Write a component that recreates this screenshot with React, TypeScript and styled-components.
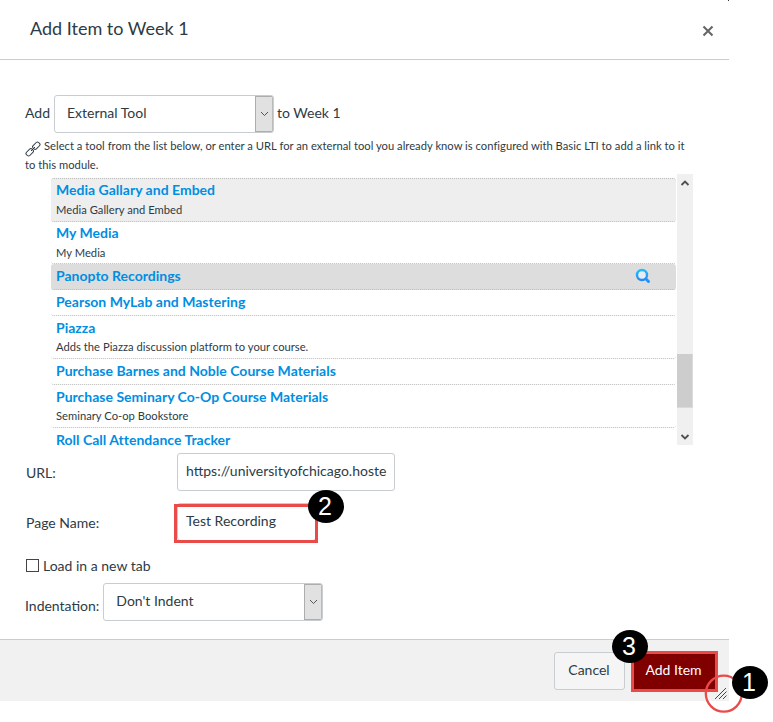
import React from "react";
import styled, { createGlobalStyle } from "styled-components";

const GlobalStyle = createGlobalStyle`
  * { box-sizing: border-box; }
  body {
    margin: 0;
    min-height: 722px;
    background: #fff;
    font-family: Lato, "Open Sans", sans-serif;
    font-size: 14px;
    line-height: 20px;
    color: #2d3b45;
  }
`;

const Dialog = styled.div`
  position: relative;
  width: 729px;
  height: 701px;
  display: flex;
  flex-direction: column;
`;

const Header = styled.header`
  height: 60px;
  flex: none;
  display: flex;
  align-items: flex-start;
  justify-content: space-between;
  padding: 16px 15px 0 30px;
  border-bottom: 1px solid #c7cdd1;
`;

const Title = styled.h2`
  margin: 0;
  font-size: 18px;
  font-weight: 400;
  line-height: 24px;
`;

const CloseButton = styled.button`
  display: flex;
  width: 12px;
  height: 12px;
  margin: 9px 0 0;
  padding: 0;
  border: 0;
  background: none;
`;

const Body = styled.main`
  flex: 1;
  padding: 35px 36px 0 25px;
`;

const Line = styled.div`
  display: flex;
  align-items: flex-start;
  height: 38px;
`;

const LineLabel = styled.span<{ $top: number; $gap?: number }>`
  margin-right: ${(p) => p.$gap ?? 0}px;
  padding-top: ${(p) => p.$top}px;
`;

const SelectBox = styled.div`
  width: 220px;
  height: 38px;
  margin-right: 3px;
  display: flex;
  justify-content: space-between;
  border: 1px solid #c7cdd1;
  border-radius: 3px;
  overflow: hidden;
  padding-left: 12px;
  line-height: 34px;
`;

const SelectArrow = styled.span`
  width: 18px;
  display: flex;
  align-items: center;
  justify-content: center;
  background: #e1e1e1;
  border: 1px solid #adadad;
  border-right-color: #bbb;
`;

const Hint = styled.p`
  margin: 3px 0 0;
  height: 38px;
  font-size: 11.2px;
  letter-spacing: 0.024px;
  line-height: 19px;
  white-space: nowrap;
`;

const HintIcon = styled.svg`
  width: 16px;
  height: 16px;
  margin: 0 3px -7px 0;
`;

const ToolArea = styled.div`
  display: flex;
  width: 642px;
  height: 271px;
  margin-left: 26px;
`;

const ToolList = styled.ul`
  list-style: none;
  width: 625px;
  height: 271px;
  margin: 0 1px 0 0;
  padding: 4px 0 0;
`;

const ToolRow = styled.li<{ $height: number; $pad: number; $bg?: string }>`
  position: relative;
  height: ${(p) => p.$height}px;
  padding: ${(p) => p.$pad}px 5px 0;
  border-bottom: 1px dotted #bbb;
  border-radius: 3px;
  background: ${(p) => p.$bg || "transparent"};

  &:first-child { border-top: 1px dotted #bbb; }
  &:last-child { border-bottom: 0; }
`;

const ToolName = styled.div`
  font-weight: 700;
  line-height: 19px;
  letter-spacing: 0.01px;
  color: #008ee2;
`;

const ToolNote = styled.div<{ $gap?: number }>`
  margin-top: ${(p) => p.$gap ?? 0}px;
  font-size: 11.2px;
  letter-spacing: 0.024px;
  line-height: 19px;
`;

const SearchIcon = styled.svg`
  position: absolute;
  right: 25px;
  top: 4px;
  width: 16px;
  height: 16px;
`;

const Scrollbar = styled.div`
  width: 16px;
  height: 271px;
  display: flex;
  flex-direction: column;
  align-items: center;
  background: #f0f0f0;
`;

const ScrollArrow = styled.svg`
  width: 10px;
  height: 17px;
  flex: none;
`;

const ScrollTrack = styled.div`
  width: 100%;
  flex: 1;
  padding-top: 163px;
`;

const ScrollThumb = styled.div`
  height: 54px;
  background: #cdcdcd;
  border-right: 1px solid #dadada;
  border-bottom: 1px solid #dadada;
`;

const Field = styled.div<{ $top: number }>`
  display: grid;
  grid-template-columns: 151px auto;
  justify-content: start;
  height: 38px;
  margin: ${(p) => p.$top}px 0 0 1px;
  line-height: 40px;
`;

const TextBox = styled.div<{ $width: number }>`
  position: relative;
  width: ${(p) => p.$width}px;
  height: 38px;
  padding-left: 8px;
  border: 1px solid #c7cdd1;
  border-radius: 3px;
  line-height: 34px;
  white-space: nowrap;
`;

const Highlight = styled.div`
  position: absolute;
  left: -4px;
  top: 0;
  width: 144px;
  height: 39px;
  border: 3px solid #e94b48;
`;

const CheckLine = styled.label`
  display: flex;
  align-items: flex-start;
  gap: 4px;
  height: 20px;
  margin: 15px 0 7px 1px;
`;

const CheckBox = styled.span`
  width: 13px;
  height: 13px;
  margin-top: 3px;
  border: 1px solid #444;
  background: #fff;
`;

const Footer = styled.footer`
  height: 62px;
  flex: none;
  display: flex;
  justify-content: flex-end;
  align-items: flex-start;
  gap: 6px;
  padding: 11px 11px 0 0;
  background: #f1f1f1;
  border-top: 1px solid #c7cdd1;
`;

const Cancel = styled.button`
  width: 71px;
  height: 38px;
  margin-top: 1px;
  padding: 0 1px 2px 0;
  font: inherit;
  color: #2d3b45;
  background: #f5f5f5;
  border: 1px solid #c7cdd1;
  border-radius: 3px;
`;

const AddItem = styled.button`
  width: 87px;
  height: 41px;
  padding: 0 2px 4px 0;
  font: inherit;
  color: #fff;
  background: #800000;
  border: 3px solid #e94b48;
  white-space: nowrap;
`;

const Badge = styled.div<{ $x: number; $y: number }>`
  position: absolute;
  left: ${(p) => p.$x}px;
  top: ${(p) => p.$y}px;
  width: 36px;
  height: 33px;
  padding-right: 2px;
  border-radius: 50%;
  background: #000;
  color: #fff;
  font: 25px/32px "Liberation Sans", Arial, sans-serif;
  text-align: center;
`;

const ResizeGrip = styled.svg`
  position: absolute;
  left: 704px;
  top: 673px;
  width: 40px;
  height: 42px;
`;

const EdgeMark = styled.i`
  position: absolute;
  left: 728px;
  top: 0;
  width: 1px;
  height: 1px;
  background: #2d3b45;
`;

type Tool = {
  name: string;
  note?: string;
  noteGap?: number;
  height: number;
  pad?: number;
  bg?: string;
  search?: boolean;
};

const tools: Tool[] = [
  { name: "Media Gallary and Embed", note: "Media Gallery and Embed", noteGap: 1, height: 44, pad: 1, bg: "#eee" },
  { name: "My Media", note: "My Media", noteGap: 1, height: 42, pad: 1 },
  { name: "Panopto Recordings", height: 26, bg: "#ddd", search: true },
  { name: "Pearson MyLab and Mastering", height: 26 },
  { name: "Piazza", note: "Adds the Piazza discussion platform to your course.", height: 43 },
  { name: "Purchase Barnes and Noble Course Materials", height: 26 },
  { name: "Purchase Seminary Co-Op Course Materials", note: "Seminary Co-op Bookstore", height: 43 },
  { name: "Roll Call Attendance Tracker", height: 17 },
];

function Select({ value }: { value: string }) {
  return (
    <SelectBox>
      {value}
      <SelectArrow>
        <svg width="9" height="6" viewBox="0 0 9 6">
          <path d="M1 1 4.5 4.5 8 1" fill="none" stroke="#555" />
        </svg>
      </SelectArrow>
    </SelectBox>
  );
}

export default function App() {
  return (
    <>
      <GlobalStyle />
      <Dialog>
        <Header>
          <Title>Add Item to Week 1</Title>
          <CloseButton aria-label="Close">
            <svg width="12" height="12" viewBox="0 0 12 12">
              <path d="M1.5 1.5 10.5 10.5M10.5 1.5 1.5 10.5" stroke="#666" strokeWidth="2.1" />
            </svg>
          </CloseButton>
        </Header>
        <Body>
          <Line>
            <LineLabel $top={8} $gap={4}>Add</LineLabel>
            <Select value="External Tool" />
            <LineLabel $top={8}>to Week 1</LineLabel>
          </Line>
          <Hint>
            <HintIcon viewBox="0 0 16 16" fill="none" stroke="#2d3b45" strokeWidth="1">
              <rect x="-3.9" y="-2.3" width="7.8" height="4.6" rx="1.7" transform="translate(11.3 4.7) rotate(-45)" />
              <rect x="-3.9" y="-2.3" width="7.8" height="4.6" rx="1.7" transform="translate(4.7 11.3) rotate(-45)" />
              <path d="M6 10 10 6" />
            </HintIcon>
            Select a tool from the list below, or enter a URL for an external tool you already know is configured with Basic LTI to add a link to it
            <br />
            to this module.
          </Hint>
          <ToolArea>
            <ToolList>
              {tools.map((t) => (
                <ToolRow key={t.name} $height={t.height} $pad={t.pad ?? 2} $bg={t.bg}>
                  <ToolName>{t.name}</ToolName>
                  {t.note && <ToolNote $gap={t.noteGap}>{t.note}</ToolNote>}
                  {t.search && (
                    <SearchIcon viewBox="0 0 16 16">
                      <defs>
                        <linearGradient id="lens" x1="0" y1="0" x2="0" y2="1">
                          <stop offset="0" stopColor="#22bdfb" />
                          <stop offset="1" stopColor="#2688f5" />
                        </linearGradient>
                      </defs>
                      <circle cx="7" cy="7" r="5" fill="#e7eef3" stroke="url(#lens)" strokeWidth="2.4" />
                      <path d="m11.3 11.3 2.2 2.2" stroke="#2a8ff7" strokeWidth="3" strokeLinecap="round" />
                    </SearchIcon>
                  )}
                </ToolRow>
              ))}
            </ToolList>
            <Scrollbar>
              <ScrollArrow viewBox="0 0 10 17">
                <path d="M1.5 11 5 7.5 8.5 11" fill="none" stroke="#505050" strokeWidth="1.8" />
              </ScrollArrow>
              <ScrollTrack>
                <ScrollThumb />
              </ScrollTrack>
              <ScrollArrow viewBox="0 0 10 17">
                <path d="M1.5 7 5 10.5 8.5 7" fill="none" stroke="#505050" strokeWidth="1.8" />
              </ScrollArrow>
            </Scrollbar>
          </ToolArea>
          <Field $top={8}>
            <span>URL:</span>
            <TextBox $width={218}>https://universityofchicago.hoste</TextBox>
          </Field>
          <Field $top={12}>
            <span>Page Name:</span>
            <TextBox $width={139}>
              Test Recording
              <Highlight />
            </TextBox>
          </Field>
          <CheckLine>
            <CheckBox />
            Load in a new tab
          </CheckLine>
          <Line>
            <LineLabel $top={13} $gap={4}>Indentation:</LineLabel>
            <Select value="Don't Indent" />
          </Line>
        </Body>
        <Footer>
          <Cancel>Cancel</Cancel>
          <AddItem>Add Item</AddItem>
        </Footer>
        <ResizeGrip viewBox="0 0 40 42">
          <path d="m11 26 11-11M15 26l7.5-7.5M19 26l3.5-3.5" fill="none" stroke="#333" strokeWidth="0.9" />
          <circle cx="19.8" cy="20.6" r="18" fill="none" stroke="#e94b48" strokeWidth="2.3" />
        </ResizeGrip>
        <Badge $x={308} $y={490}>2</Badge>
        <Badge $x={612} $y={630}>3</Badge>
        <Badge $x={732} $y={666}>1</Badge>
        <EdgeMark />
      </Dialog>
    </>
  );
}
